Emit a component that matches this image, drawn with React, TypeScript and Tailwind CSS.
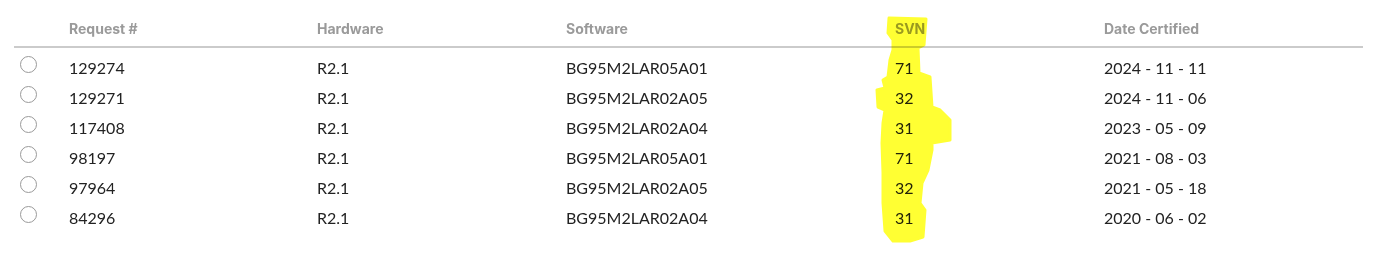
import React from 'react';

interface Cert {
  request: string;
  hardware: string;
  software: string;
  svn: string;
  date: string;
}

const certs: Cert[] = [
  { request: '129274', hardware: 'R2.1', software: 'BG95M2LAR05A01', svn: '71', date: '2024 - 11 - 11' },
  { request: '129271', hardware: 'R2.1', software: 'BG95M2LAR02A05', svn: '32', date: '2024 - 11 - 06' },
  { request: '117408', hardware: 'R2.1', software: 'BG95M2LAR02A04', svn: '31', date: '2023 - 05 - 09' },
  { request: '98197', hardware: 'R2.1', software: 'BG95M2LAR05A01', svn: '71', date: '2021 - 08 - 03' },
  { request: '97964', hardware: 'R2.1', software: 'BG95M2LAR02A05', svn: '32', date: '2021 - 05 - 18' },
  { request: '84296', hardware: 'R2.1', software: 'BG95M2LAR02A04', svn: '31', date: '2020 - 06 - 02' },
];

const cols = 'grid grid-cols-[55px_248px_249px_329px_209px_259px]';

// freehand marker over the SVN column
const marker =
  '889,18 926,19 924,45 918,48 919,73 930,77 932,107 940,110 950,120 950,140 932,143 932,150 928,170 922,183 920,203 925,210 923,237 910,241 893,241 885,231 883,203 883,173 882,143 883,123 885,110 878,107 877,90 885,88 883,80 888,77 890,60 893,50 893,40 888,33';

export default function App() {
  return (
    <div className="relative w-[1396px] h-[266px] bg-white font-['Lato',sans-serif] text-[#222]">
      <div className="pl-[14px]">
        <div className={`${cols} w-[1349px] h-[48px] items-end pb-[7px] border-b-2 border-[#cbcbcb] font-['Inter',sans-serif] text-[14px] font-bold text-[#9a9a9a]`}>
          <div />
          <div>Request #</div>
          <div>Hardware</div>
          <div>Software</div>
          <div>SVN</div>
          <div>Date Certified</div>
        </div>
        <div className="pt-[5px]">
          {certs.map((c) => (
            <div key={c.request} className={`${cols} w-[1349px] h-[30px] items-center text-[16px]`}>
              <div className="pl-[6px]">
                <span className="block w-[17px] h-[17px] -mt-[7px] rounded-full border border-[#9a9a9a] bg-white" />
              </div>
              <div>{c.request}</div>
              <div>{c.hardware}</div>
              <div>{c.software}</div>
              <div>{c.svn}</div>
              <div>{c.date}</div>
            </div>
          ))}
        </div>
      </div>
      <svg className="absolute inset-0 pointer-events-none mix-blend-multiply" width="1396" height="266">
        <polygon points={marker} fill="#ffff33" strokeLinejoin="round" stroke="#ffff33" strokeWidth="3" />
      </svg>
    </div>
  );
}
